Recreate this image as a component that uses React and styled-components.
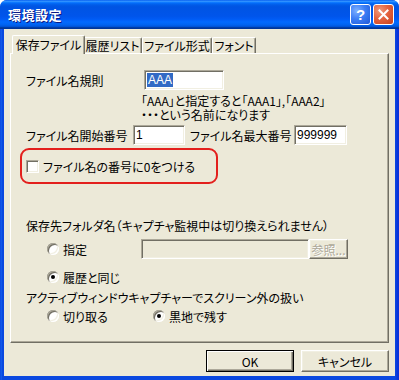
import React from "react";
import styled, { createGlobalStyle, css } from "styled-components";

const Global = createGlobalStyle`
  html, body { margin: 0; padding: 0; background: #fff; }
  body {
    font-family: "Noto Sans CJK JP", "Noto Sans", sans-serif;
    font-size: 12px;
    color: #000;
    font-feature-settings: "palt";
  }
  * { box-sizing: border-box; }
`;

const Window = styled.div`
  width: 399px;
  height: 380px;
  display: flex;
  flex-direction: column;
  background: linear-gradient(to right, #0831d9 0, #166aee 1px, #0a48e0 2px, #0a48e0 395px, #0831d9 398px);
  border-radius: 7px 7px 0 0;
  overflow: hidden;
`;

const TitleBar = styled.div`
  flex: none;
  height: 29px;
  display: flex;
  align-items: center;
  justify-content: space-between;
  padding: 0 5px 0 8px;
  background: linear-gradient(
    180deg,
    #0058ee 0%,
    #3593ff 4%,
    #288eff 6%,
    #127dff 8%,
    #036ffc 10%,
    #0262ee 14%,
    #0057e5 20%,
    #0054e3 24%,
    #0055eb 56%,
    #005bf5 66%,
    #026afe 76%,
    #0062ef 86%,
    #0052d6 92%,
    #0040ab 94%,
    #003092 100%
  );
`;

const Title = styled.span`
  color: #fff;
  font-weight: bold;
  font-size: 13px;
  letter-spacing: 0.5px;
  text-shadow: 1px 1px 0 #0a1883;
`;

const Caption = styled.div`
  display: flex;
  gap: 2px;
`;

const CapButton = styled.div`
  width: 21px;
  height: 21px;
  border: 1px solid #fff;
  border-radius: 3px;
  display: flex;
  align-items: center;
  justify-content: center;
  color: #fff;
  font-family: "Liberation Sans", sans-serif;
  font-weight: bold;
  font-size: 15px;
  ${(p) =>
    p.$close
      ? css`
          background: radial-gradient(circle at 30% 30%, #f09a7c 0%, #e4633f 45%, #c8401b 100%);
        `
      : css`
          background: radial-gradient(circle at 30% 30%, #7db0ff 0%, #3c7ef5 45%, #1d57d8 100%);
        `}
`;

const Client = styled.div`
  flex: 1;
  margin: 0 4px 4px;
  background: #ece9d8;
  padding: 6px 6px 0;
  display: flex;
  flex-direction: column;
`;

const TabStrip = styled.div`
  height: 18px;
  display: flex;
  align-items: flex-end;
  padding-left: 4px;
`;

const Tab = styled.div`
  width: ${(p) => p.$w}px;
  height: 16px;
  display: flex;
  align-items: center;
  justify-content: center;
  border-top: 1px solid #fff;
  border-left: 1px solid #fff;
  border-right: 1px solid #716f64;
  border-radius: 2px 2px 0 0;
  box-shadow: inset -1px 0 #aca899;
  background: #ece9d8;
  white-space: nowrap;
  ${(p) =>
    p.$active &&
    css`
      width: ${p.$w + 4}px;
      height: 19px;
      margin: 0 -2px -1px;
      padding-bottom: 2px;
      position: relative;
      z-index: 1;
    `}
`;

const Panel = styled.div`
  height: 290px;
  border: 1px solid;
  border-color: #fff #716f64 #716f64 #fff;
  box-shadow: inset -1px -1px #aca899;
  padding: 16px 0 0 15px;
  display: flex;
  flex-direction: column;
  align-items: flex-start;
`;

const Row = styled.div`
  display: flex;
  align-items: center;
  height: ${(p) => p.$h || 20}px;
  margin-top: ${(p) => p.$mt || 0}px;
  padding-left: ${(p) => p.$pl || 0}px;
  white-space: nowrap;
`;

const Label = styled.span`
  width: ${(p) => p.$w}px;
  margin-left: ${(p) => p.$ml || 0}px;
  flex: none;
`;

const TextBox = styled.div`
  width: ${(p) => p.$w}px;
  height: 20px;
  flex: none;
  border: 1px solid;
  border-color: #aca899 #fff #fff #aca899;
  box-shadow: inset 1px 1px #716f64, inset -1px -1px #f1efe2;
  background: ${(p) => (p.$disabled ? "#ece9d8" : "#fff")};
  padding: 2px 0 0 2px;
  line-height: 14px;
  font-family: "Liberation Sans", sans-serif;
  font-size: 12px;
`;

const Selected = styled.span`
  background: #316ac5;
  color: #fff;
  padding: 0 1px;
  display: inline-block;
  line-height: 14px;
`;

const Hint = styled.div`
  margin-top: 4px;
  padding-left: 115px;
  display: flex;
  flex-direction: column;
`;

const HintLine = styled.span`
  line-height: 14px;
  height: 14px;
  white-space: nowrap;
`;

const Annotation = styled.div`
  margin-top: 3px;
  margin-left: -6px;
  width: 198px;
  height: 36px;
  border: 2px solid #e3201d;
  border-radius: 9px;
  padding: 0 0 0 4px;
  display: flex;
  align-items: center;
`;

const CheckBox = styled.span`
  width: 13px;
  height: 13px;
  flex: none;
  border: 1px solid;
  border-color: #aca899 #fff #fff #aca899;
  box-shadow: inset 1px 1px #716f64, inset -1px -1px #f1efe2;
  background: #fff;
  margin-right: 4px;
`;

const Section = styled.div`
  margin-top: ${(p) => p.$mt}px;
  line-height: 12px;
  white-space: nowrap;
`;

const Radio = styled.span`
  width: 12px;
  height: 12px;
  flex: none;
  border-radius: 50%;
  background: #fff;
  box-shadow: inset 1px 1px #aca899, inset -1px -1px #fff, inset 2px 2px #716f64, inset -2px -2px #f1efe2;
  display: flex;
  align-items: center;
  justify-content: center;
  margin-right: 4px;
  margin-left: ${(p) => p.$ml || 0}px;
  &::after {
    content: "";
    width: 4px;
    height: 4px;
    border-radius: 50%;
    background: ${(p) => (p.$checked ? "#000" : "transparent")};
  }
`;

const PushButton = styled.div`
  width: ${(p) => p.$w}px;
  height: ${(p) => p.$h}px;
  flex: none;
  display: flex;
  align-items: center;
  justify-content: center;
  background: #ece9d8;
  border: 1px solid;
  border-color: #fff #716f64 #716f64 #fff;
  box-shadow: inset -1px -1px #aca899, inset 1px 1px #f1efe2;
  ${(p) =>
    p.$default &&
    css`
      border-color: #000;
      box-shadow: inset 1px 1px #fff, inset -1px -1px #716f64, inset -2px -2px #aca899;
    `}
  ${(p) =>
    p.$disabled &&
    css`
      color: #aca899;
      text-shadow: 1px 1px 0 #fff;
    `}
`;

const ButtonRow = styled.div`
  margin-top: 7px;
  display: flex;
  justify-content: flex-end;
  gap: 7px;
`;

export default function App() {
  return (
    <>
      <Global />
      <Window>
        <TitleBar>
          <Title>環境設定</Title>
          <Caption>
            <CapButton>?</CapButton>
            <CapButton $close>
              <svg width="11" height="11" viewBox="0 0 11 11">
                <path d="M1.5 1.5 L9.5 9.5 M9.5 1.5 L1.5 9.5" stroke="#fff" strokeWidth="2" strokeLinecap="square" />
              </svg>
            </CapButton>
          </Caption>
        </TitleBar>
        <Client>
          <TabStrip>
            <Tab $w={69} $active>保存ファイル</Tab>
            <Tab $w={59}>履歴リスト</Tab>
            <Tab $w={70}>ファイル形式</Tab>
            <Tab $w={44}>フォント</Tab>
          </TabStrip>
          <Panel>
            <Row>
              <Label $w={118}>ファイル名規則</Label>
              <TextBox $w={80}>
                <Selected>AAA</Selected>
              </TextBox>
            </Row>
            <Hint>
              <HintLine>「AAA」と指定すると「AAA1」,「AAA2」</HintLine>
              <HintLine>・・・という名前になります</HintLine>
            </Hint>
            <Row $mt={3}>
              <Label $w={107}>ファイル名開始番号</Label>
              <TextBox $w={52}>1</TextBox>
              <Label $w={104} $ml={5}>ファイル名最大番号</Label>
              <TextBox $w={53}>999999</TextBox>
            </Row>
            <Annotation>
              <CheckBox />
              <span>ファイル名の番号に0をつける</span>
            </Annotation>
            <Section $mt={36}>保存先フォルダ名（キャプチャ監視中は切り換えられません）</Section>
            <Row $mt={7} $pl={21}>
              <Radio />
              <Label $w={78}>指定</Label>
              <TextBox $w={168} $disabled />
              <PushButton $w={39} $h={20} $disabled>参照...</PushButton>
            </Row>
            <Row $mt={11} $h={14} $pl={21}>
              <Radio $checked />
              <span>履歴と同じ</span>
            </Row>
            <Section $mt={8}>アクティブウィンドウキャプチャーでスクリーン外の扱い</Section>
            <Row $mt={5} $h={14} $pl={21}>
              <Radio />
              <Label $w={90}>切り取る</Label>
              <Radio $checked />
              <span>黒地で残す</span>
            </Row>
          </Panel>
          <ButtonRow>
            <PushButton $w={88} $h={22} $default>OK</PushButton>
            <PushButton $w={88} $h={22}>キャンセル</PushButton>
          </ButtonRow>
        </Client>
      </Window>
    </>
  );
}
